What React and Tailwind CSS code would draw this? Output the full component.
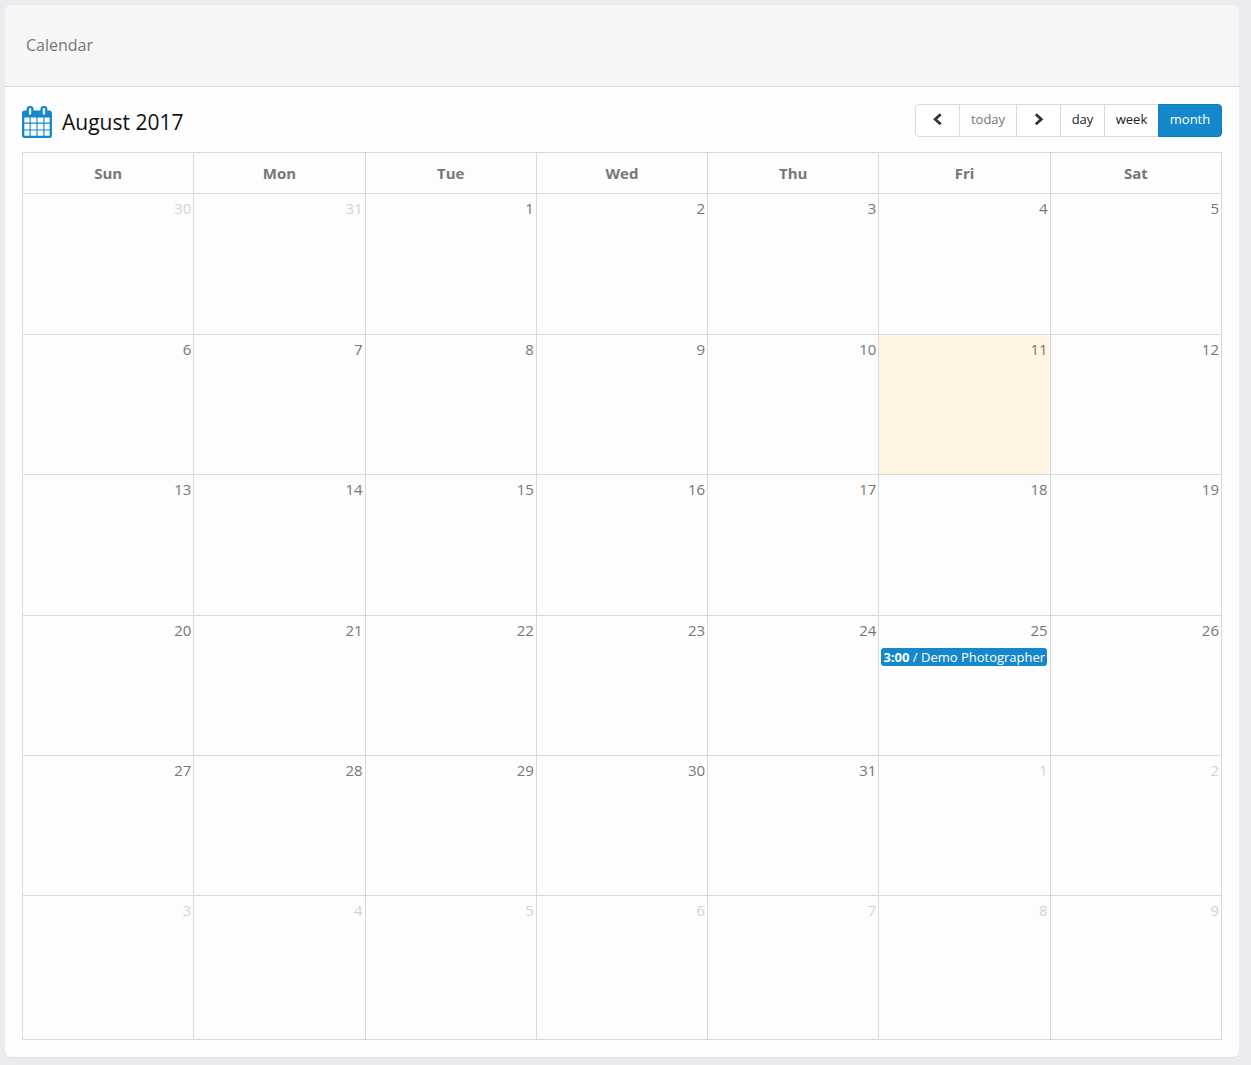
const dayNames = ['Sun', 'Mon', 'Tue', 'Wed', 'Thu', 'Fri', 'Sat'];

// The month grid starts on July 30 and covers six weeks.
const weeks = Array.from({ length: 6 }, (_, w) =>
  Array.from({ length: 7 }, (_, d) => {
    const date = new Date(2017, 6, 30 + w * 7 + d);
    return { day: date.getDate(), inMonth: date.getMonth() === 7 };
  })
);

const rowHeights = ['h-[141px]', 'h-[140px]', 'h-[141px]', 'h-[140px]', 'h-[140px]', 'h-[144px]'];

function CalendarIcon() {
  return (
    <svg className="h-8 w-[30px] shrink-0 fill-[#1588cb]" viewBox="64 0 1664 1792" preserveAspectRatio="none" aria-hidden="true">
      <path d="M192 1664h288v-288h-288v288zm352 0h320v-288h-320v288zm-352-352h288v-320h-288v320zm352 0h320v-320h-320v320zm-352-384h288v-288h-288v288zm736 736h320v-288h-320v288zm-384-736h320v-288h-320v288zm768 736h288v-288h-288v288zm-384-352h320v-320h-320v320zm-352-864v-288q0-13-9.5-22.5t-22.5-9.5h-64q-13 0-22.5 9.5t-9.5 22.5v288q0 13 9.5 22.5t22.5 9.5h64q13 0 22.5-9.5t9.5-22.5zm736 864h288v-320h-288v320zm-384-384h320v-288h-320v288zm384 0h288v-288h-288v288zm32-480v-288q0-13-9.5-22.5t-22.5-9.5h-64q-13 0-22.5 9.5t-9.5 22.5v288q0 13 9.5 22.5t22.5 9.5h64q13 0 22.5-9.5t9.5-22.5zm384-64v1280q0 52-38 90t-90 38h-1408q-52 0-90-38t-38-90v-1280q0-52 38-90t90-38h128v-96q0-66 47-113t113-47h64q66 0 113 47t47 113v96h384v-96q0-66 47-113t113-47h64q66 0 113 47t47 113v96h128q52 0 90 38t38 90z" />
    </svg>
  );
}

function Chevron({ points }) {
  return (
    <svg className="h-3 w-3" viewBox="0 0 12 12" fill="none" stroke="#333" strokeWidth="2.8" aria-hidden="true">
      <polyline points={points} />
    </svg>
  );
}

const buttonBase = 'flex h-[33px] items-center justify-center border pb-1 text-[13px] leading-5';

export default function App() {
  return (
    <div className="min-h-screen bg-[#ebecf0] pt-[5px] pr-3 pb-2 pl-[5px] font-['Open_Sans',sans-serif] text-[#777]">
      <main className="overflow-hidden rounded-md bg-[#fdfdfd] shadow-[0_1px_1px_rgba(0,0,0,0.06)]">
        <header className="border-b border-[#dadada] bg-[#f6f6f6] px-[21px] py-7">
          <h1 className="text-base leading-[25px]">Calendar</h1>
        </header>

        <section className="p-[17px]">
          <div className="mb-[15px] flex h-[33px] items-center justify-between">
            <div className="flex items-center gap-[10px] pt-[3px]">
              <CalendarIcon />
              <h2 className="text-[21px] leading-8 text-[#111]">August 2017</h2>
            </div>
            <div className="flex">
              <button type="button" aria-label="Previous month" className={`${buttonBase} w-[45px] rounded-l border-[#d9d9d9] bg-white`}>
                <Chevron points="8.7,1.2 3.2,6.2 8.7,11.2" />
              </button>
              <button type="button" disabled className={`${buttonBase} -ml-px w-[58px] border-[#dedede] bg-[#fdfdfd] text-[#777]`}>
                today
              </button>
              <button type="button" aria-label="Next month" className={`${buttonBase} -ml-px w-[45px] border-[#d9d9d9] bg-white`}>
                <Chevron points="2.8,1.2 8.3,6.2 2.8,11.2" />
              </button>
              <button type="button" className={`${buttonBase} -ml-px w-[45px] border-[#d9d9d9] bg-white text-[#222]`}>
                day
              </button>
              <button type="button" className={`${buttonBase} -ml-px w-[55px] border-[#d9d9d9] bg-white text-[#222]`}>
                week
              </button>
              <button type="button" aria-pressed="true" className={`${buttonBase} -ml-px w-16 rounded-r border-[#127ab8] bg-[#1588cb] text-white`}>
                month
              </button>
            </div>
          </div>

          <table className="w-full table-fixed border-collapse border border-[#dadada]">
            <thead>
              <tr className="h-[41px]">
                {dayNames.map((name) => (
                  <th key={name} scope="col" className="border border-[#dadada] p-0 text-center text-[15px] leading-5 font-bold">
                    {name}
                  </th>
                ))}
              </tr>
            </thead>
            <tbody>
              {weeks.map((week, w) => (
                <tr key={w} className={rowHeights[w]}>
                  {week.map(({ day, inMonth }) => (
                    <td
                      key={day}
                      className={`border border-[#dadada] px-[2px] pt-1 pb-0 text-right align-top text-[15px] leading-5 ${
                        inMonth ? 'text-[#777]' : 'text-[#d3d3d3]'
                      } ${inMonth && day === 11 ? 'bg-[#fef6e3]' : ''}`}
                    >
                      {day}
                      {inMonth && day === 25 && (
                        <a
                          href="#event"
                          className="mt-2 mr-px block overflow-hidden rounded-[3px] bg-[#1588cb] px-[2px] text-left text-[13px] leading-[18px] whitespace-nowrap text-white"
                        >
                          <strong className="font-bold">3:00</strong> / Demo Photographer
                        </a>
                      )}
                    </td>
                  ))}
                </tr>
              ))}
            </tbody>
          </table>
        </section>
      </main>
    </div>
  );
}
